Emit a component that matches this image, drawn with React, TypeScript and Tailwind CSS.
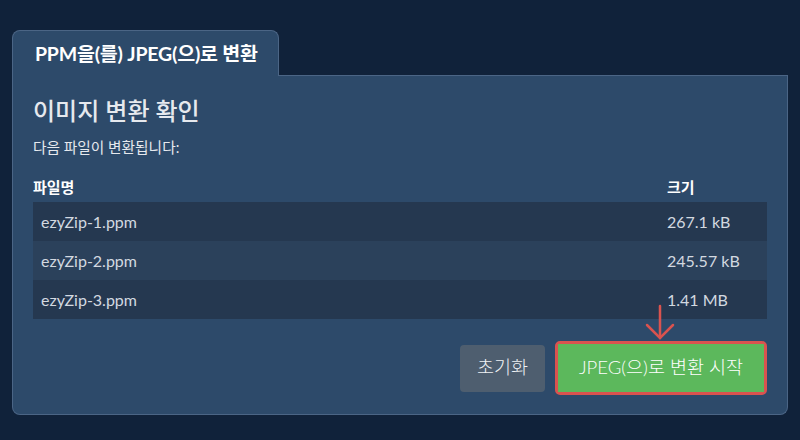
const rows = [
  { name: "ezyZip-1.ppm", size: "267.1 kB" },
  { name: "ezyZip-2.ppm", size: "245.57 kB" },
  { name: "ezyZip-3.ppm", size: "1.41 MB" },
];

const font = "font-['Lato','Noto_Sans_CJK_KR',sans-serif]";

export default function App() {
  return (
    <div className={`w-[800px] h-[440px] bg-[#10223a] pt-[30px] px-[12px] ${font}`}>
      <div className="flex">
        <div className="w-[267px] h-[46px] bg-[#2d4a6a] border border-b-0 border-[#4b6585] rounded-t-[8px] flex items-center pl-[22px] text-white text-[19.5px] font-bold tracking-[-0.2px]">
          PPM을(를) JPEG(으)로 변환
        </div>
        <div className="flex-1 border-b border-[#4b6585]" />
      </div>
      <div className="h-[339px] bg-[#2d4a6a] border border-t-0 border-[#4b6585] rounded-b-[8px] px-[20px] pt-[18px]">
        <h2 className="text-[24px] text-[#e6e9ee] font-medium leading-[34px]">이미지 변환 확인</h2>
        <p className="text-[14.7px] text-[#e6e9ee] mt-[9px] leading-[20px]">다음 파일이 변환됩니다:</p>
        <div className="mt-[21px] flex text-[15px] font-bold text-white leading-[18px]">
          <div className="flex-1">파일명</div>
          <div className="w-[100px]">크기</div>
        </div>
        <div className="mt-[6px] w-[734px]">
          {rows.map((r, i) => (
            <div
              key={r.name}
              className={`flex items-center h-[39px] pl-[8px] text-[16px] text-[#d3d9e0] ${i % 2 === 0 ? "bg-[#253850]" : "bg-[#2b415b]"}`}
            >
              <div className="flex-1">{r.name}</div>
              <div className="w-[100px]">{r.size}</div>
            </div>
          ))}
        </div>
        <div className="relative flex justify-end items-center gap-[10px] mt-[22px] w-[734px]">
          <svg className="absolute left-[612px] top-[-37px]" width="30" height="37" viewBox="0 0 30 37" fill="none" stroke="#d9534f" strokeWidth="2.5" strokeLinecap="round">
            <path d="M15 2 V34" />
            <path d="M2 21 L15 34 L28 21" />
          </svg>
          <button className="h-[47px] w-[85px] rounded-[4px] bg-[#4e5e6f] text-[#eef1f4] text-[18.5px] font-light">초기화</button>
          <div className="rounded-[5px] border-[3px] border-[#d9534f]">
            <button className="h-[48px] w-[206px] bg-[#5cb85c] text-white text-[18.5px] font-light">JPEG(으)로 변환 시작</button>
          </div>
        </div>
      </div>
    </div>
  );
}
